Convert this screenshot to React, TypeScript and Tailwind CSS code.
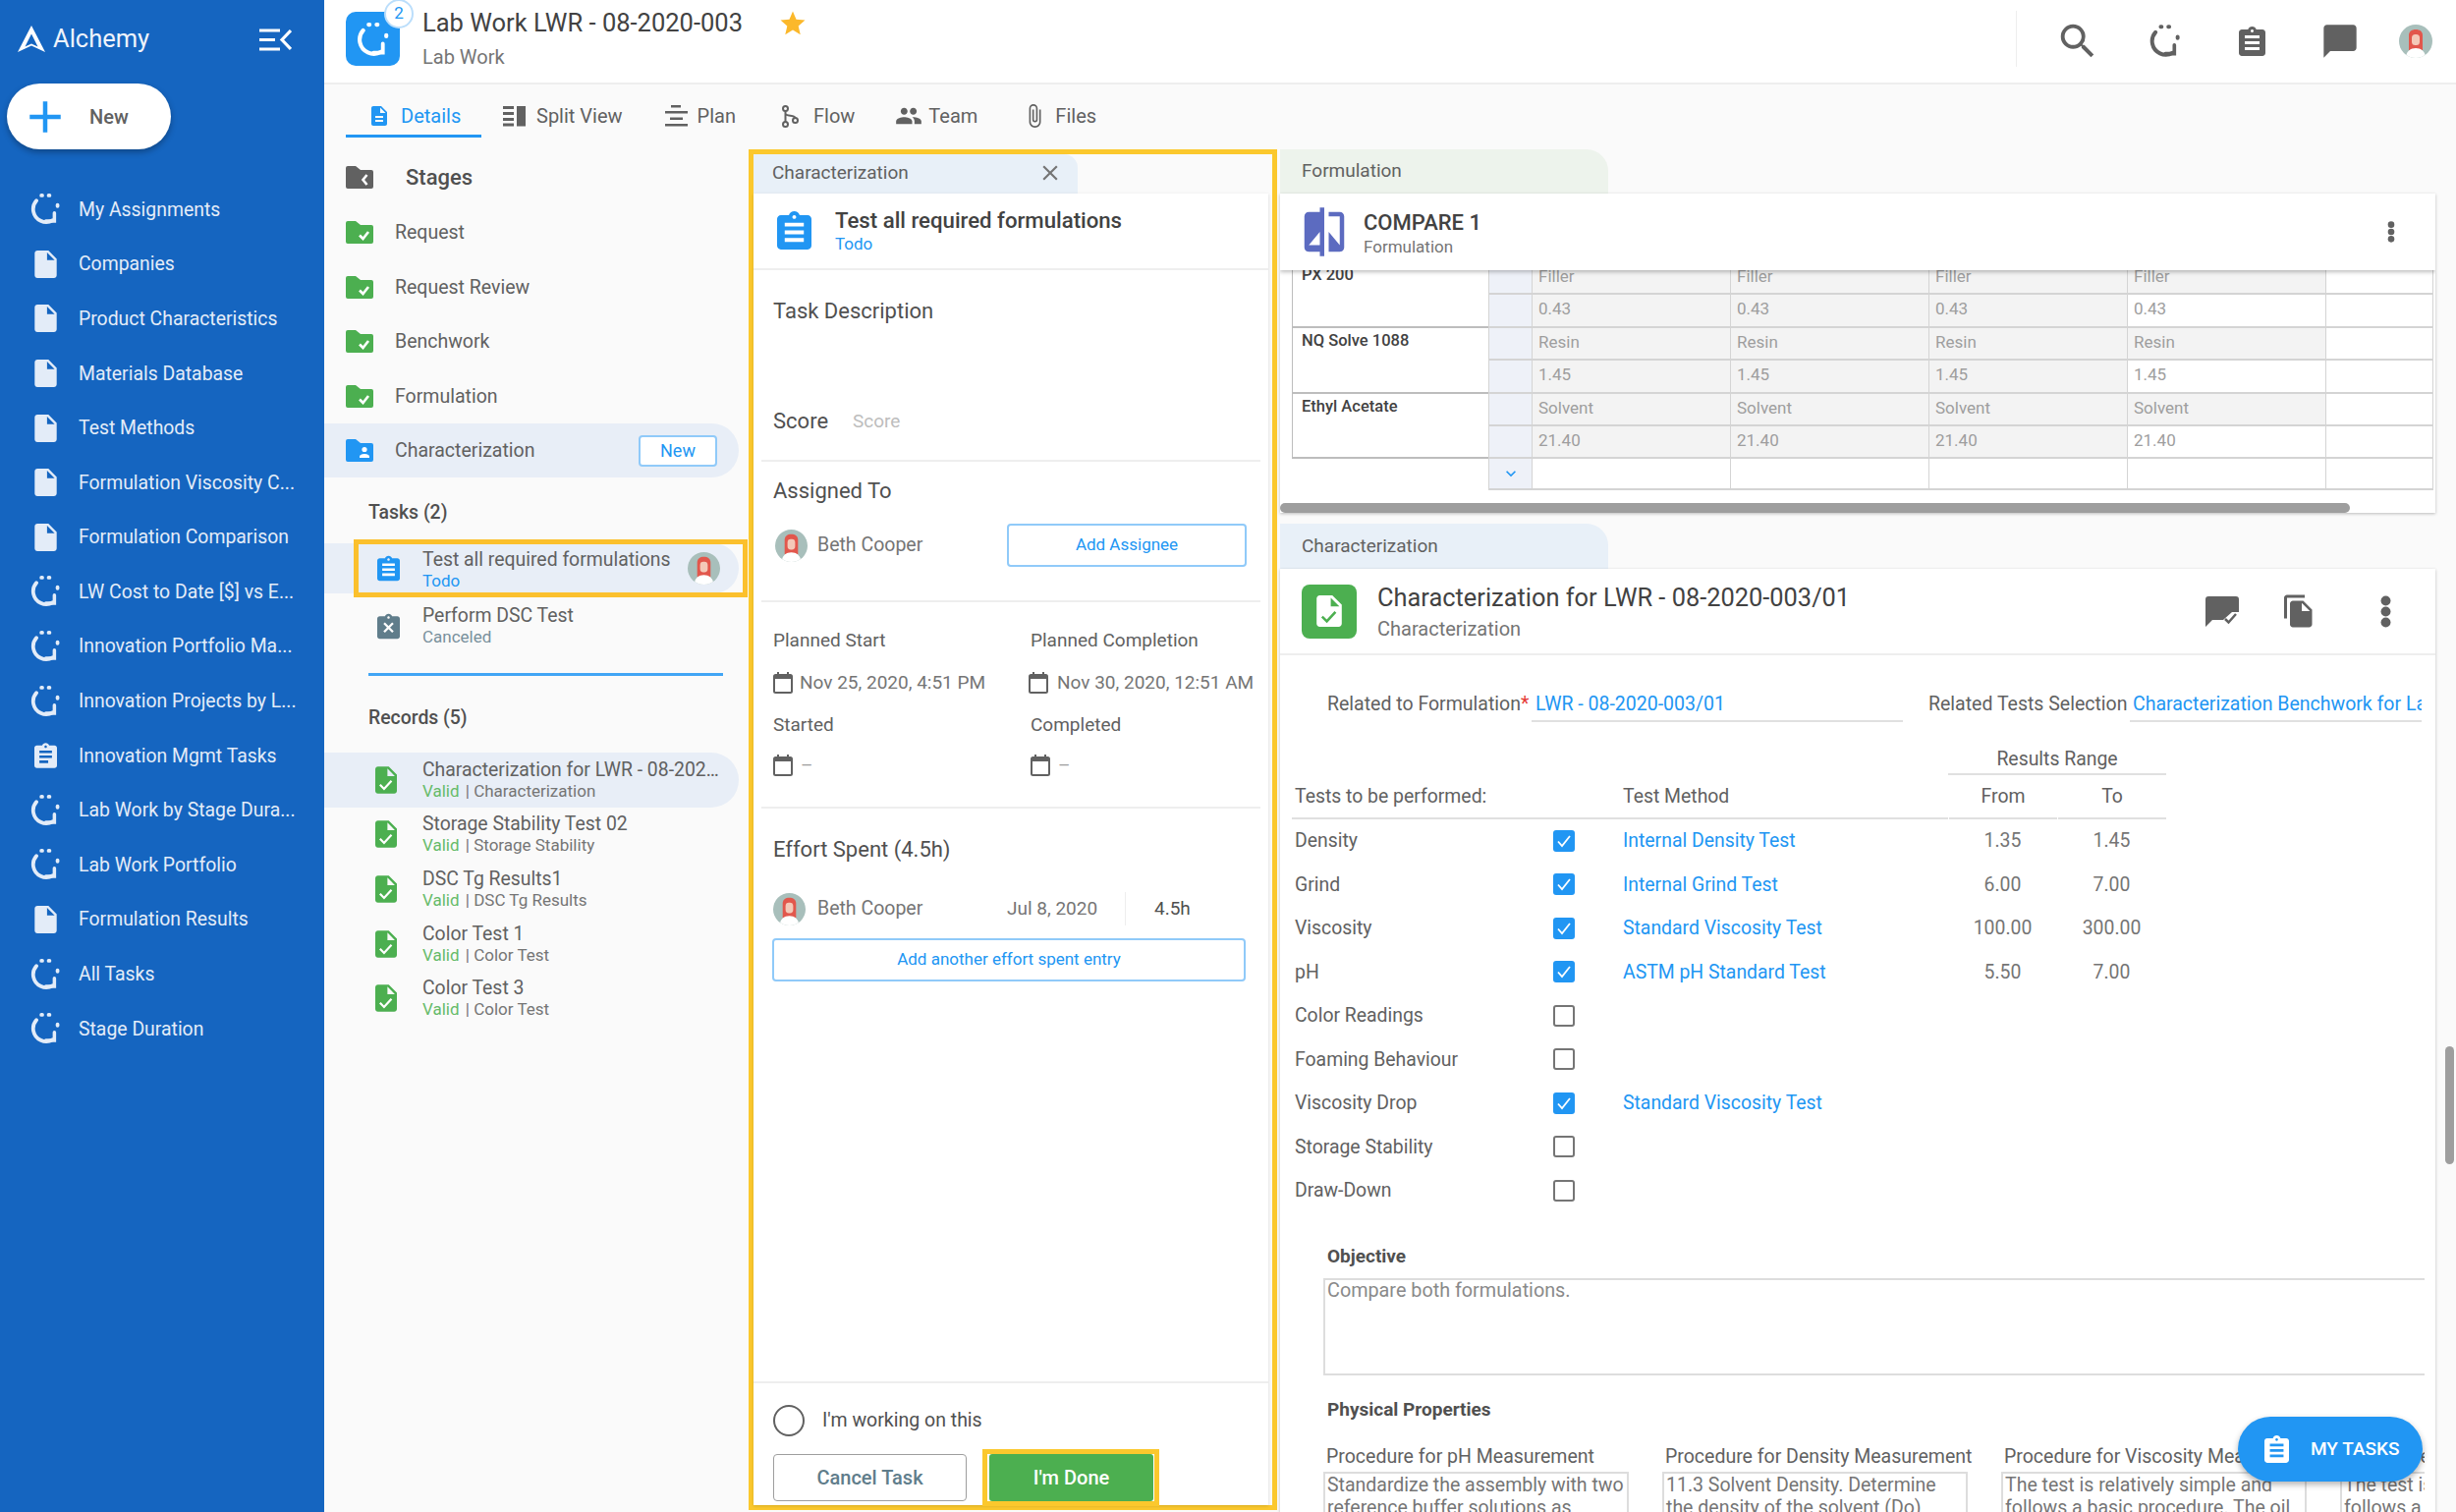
import type { ReactNode } from 'react'
import { MdAdd, MdAttachFile, MdChatBubble, MdClose, MdCompare, MdDescription, MdExpandMore, MdFileCopy, MdPeople, MdSearch, MdStar } from 'react-icons/md'

type IconProps = { className?: string }

const DOC_PATH = 'M14 2H6c-1.1 0-1.99.9-1.99 2L4 20c0 1.1.89 2 1.99 2H18c1.1 0 2-.9 2-2V8l-6-6zm-1 7V3.5L18.5 9H13z'
const CLIP_PATH = 'M19 3h-4.18C14.4 1.84 13.3 1 12 1c-1.3 0-2.4.84-2.82 2H5c-1.1 0-2 .9-2 2v14c0 1.1.9 2 2 2h14c1.1 0 2-.9 2-2V5c0-1.1-.9-2-2-2zm-7 0c.55 0 1 .45 1 1s-.45 1-1 1-1-.45-1-1 .45-1 1-1z'
const FOLDER_PATH = 'M0 2a2 2 0 0 1 2-2h8l5 4h11a2 2 0 0 1 2 2v15a2 2 0 0 1-2 2H2a2 2 0 0 1-2-2z'

function CycleIcon({ className }: IconProps) {
  return (
    <svg viewBox="2 1.5 21 22" fill="none" stroke="currentColor" strokeWidth="2.6" strokeLinecap="round" className={className}>
      <path d="M6 6.500A9 9 0 0 0 9 20.600a9 9 0 0 0 8.500-.4" />
      <path d="M18.600 15v5.800h-6" strokeWidth="2.400" />
      <path d="M9.500 2.800h.6M14.600 2.800h.6M20.800 9.500v.8" />
    </svg>
  )
}

function DocIcon({ className }: IconProps) {
  return (
    <svg viewBox="4 2 16 20" fill="currentColor" className={className}>
      <path d={DOC_PATH} />
    </svg>
  )
}

function ClipIcon({ className }: IconProps) {
  return (
    <svg viewBox="3 1 18 20" fill="currentColor" className={className}>
      <path d={CLIP_PATH} />
      <path d="M7 7h10v2H7zM7 11h10v2H7zM7 15h10v2H7z" fill="#fff" />
    </svg>
  )
}

function ClipCancelIcon({ className }: IconProps) {
  return (
    <svg viewBox="3 1 18 20" fill="currentColor" className={className}>
      <path d={CLIP_PATH} />
      <path d="M8.500 8.500l7 7M15.500 8.500l-7 7" stroke="#fff" strokeWidth="1.800" fill="none" />
    </svg>
  )
}

function DocCheckIcon({ className }: IconProps) {
  return (
    <svg viewBox="4 2 16 20" fill="currentColor" className={className}>
      <path d={DOC_PATH} />
      <path d="M7.500 15.500l3 3 5.500-6" stroke="#fff" strokeWidth="1.600" fill="none" />
    </svg>
  )
}

function FolderIcon({ kind, className }: IconProps & { kind: 'check' | 'back' | 'person' }) {
  return (
    <svg viewBox="0 0 28 23" fill="currentColor" className={className}>
      <path d={FOLDER_PATH} />
      {kind === 'check' && <path d="M14 14.500l3.500 3.500 5.500-7" stroke="#fff" strokeWidth="2.600" fill="none" />}
      {kind === 'back' && <path d="M21.500 9l-4 5 4 5" stroke="#fff" strokeWidth="2.600" fill="none" />}
      {kind === 'person' && (
        <g fill="#fff">
          <circle cx="19" cy="10.500" r="2.600" />
          <path d="M14 19v-1.500c0-1.800 3-2.600 5-2.600s5 .8 5 2.600V19z" />
        </g>
      )}
    </svg>
  )
}

function Avatar({ className }: IconProps) {
  return (
    <svg viewBox="0 0 34 34" className={className}>
      <defs>
        <clipPath id="avatar-clip">
          <circle cx="17" cy="17" r="17" />
        </clipPath>
      </defs>
      <g clipPath="url(#avatar-clip)">
        <rect width="34" height="34" fill="#a8bfbb" />
        <path d="M10 26V11c0-4 3-6 7-6s7 2 7 6v15z" fill="#e2574c" />
        <rect x="13" y="10" width="8" height="11" rx="3.500" fill="#f4c9b8" />
        <path d="M7 34c0-7 5-10 10-10s10 3 10 10z" fill="#fff" />
      </g>
    </svg>
  )
}

function CalendarIcon() {
  return (
    <svg viewBox="0 0 20 22" className="h-[22px] w-[20px] shrink-0" fill="none" stroke="#616161" strokeWidth="2">
      <rect x="1" y="3" width="18" height="18" rx="1.500" />
      <path d="M1 5h18" strokeWidth="4" />
      <path d="M5 0v3M15 0v3" />
    </svg>
  )
}

function Kebab({ className }: IconProps) {
  return (
    <svg viewBox="0 0 10 30" fill="currentColor" className={className}>
      <circle cx="5" cy="5" r="4.500" />
      <circle cx="5" cy="15" r="4.500" />
      <circle cx="5" cy="25" r="4.500" />
    </svg>
  )
}

function SplitIcon({ className }: IconProps) {
  return (
    <svg viewBox="0 0 23 22" fill="currentColor" className={className}>
      <path d="M0 1h11v3H0zM0 7h11v3H0zM0 13h11v3H0zM0 18.500h11v3H0zM14 1h9v20.500h-9z" />
    </svg>
  )
}

function PlanIcon({ className }: IconProps) {
  return (
    <svg viewBox="0 0 23 22" fill="currentColor" className={className}>
      <path d="M6 0h10v2.500H6zM0 6h23v2.500H0zM5 12.500h13V15H5zM0 19h23v2.500H0z" />
    </svg>
  )
}

function FlowIcon({ className }: IconProps) {
  return (
    <svg viewBox="0 0 17 23" fill="none" stroke="currentColor" strokeWidth="2" className={className}>
      <circle cx="3.500" cy="3.500" r="2.500" />
      <circle cx="3.500" cy="19.500" r="2.500" />
      <circle cx="13.500" cy="15.500" r="2.500" />
      <path d="M3.500 6v11M3.500 8.500c0 3 10 1.500 10 4.500" />
    </svg>
  )
}

function NoteCheckIcon({ className }: IconProps) {
  return (
    <svg viewBox="0 0 34 31" fill="currentColor" className={className}>
      <path d="M3 0h28a3 3 0 0 1 3 3v13h-7l-9 8H7l-7 7V3a3 3 0 0 1 3-3z" />
      <path d="M20 23l3.500 3.500 7.500-8.500" stroke="currentColor" strokeWidth="2.500" fill="none" />
    </svg>
  )
}

function LogoMark() {
  return (
    <svg viewBox="0 0 28 28" className="h-[28px] w-[28px]" fill="#fff">
      <path fillRule="evenodd" d="M14 0l14 27-14-6.500L0 27zM14 8.500L7.500 21.500 14 18.500l6.500 3z" />
    </svg>
  )
}

function CollapseIcon() {
  return (
    <svg viewBox="0 0 33 23" className="h-[23px] w-[33px]" fill="none" stroke="#fff" strokeWidth="3.200">
      <path d="M0 2h21M0 11.500h16M0 21h21M32 2l-9 9.500 9 9.500" />
    </svg>
  )
}

const sidebarItems: { label: string; icon: 'cycle' | 'doc' | 'clip' }[] = [
  { label: 'My Assignments', icon: 'cycle' },
  { label: 'Companies', icon: 'doc' },
  { label: 'Product Characteristics', icon: 'doc' },
  { label: 'Materials Database', icon: 'doc' },
  { label: 'Test Methods', icon: 'doc' },
  { label: 'Formulation Viscosity C...', icon: 'doc' },
  { label: 'Formulation Comparison', icon: 'doc' },
  { label: 'LW Cost to Date [$] vs E...', icon: 'cycle' },
  { label: 'Innovation Portfolio Ma...', icon: 'cycle' },
  { label: 'Innovation Projects by L...', icon: 'cycle' },
  { label: 'Innovation Mgmt Tasks', icon: 'clip' },
  { label: 'Lab Work by Stage Dura...', icon: 'cycle' },
  { label: 'Lab Work Portfolio', icon: 'cycle' },
  { label: 'Formulation Results', icon: 'doc' },
  { label: 'All Tasks', icon: 'cycle' },
  { label: 'Stage Duration', icon: 'cycle' },
]

function Sidebar() {
  return (
    <aside className="flex w-[330px] shrink-0 flex-col bg-[#1565c0]">
      <div className="mb-[5px] flex h-[80px] items-center justify-between pl-[18px] pr-[33px]">
        <div className="flex items-center gap-[8px]">
          <LogoMark />
          <span className="text-[25.500px] leading-none text-[#eef3fb]">Alchemy</span>
        </div>
        <CollapseIcon />
      </div>
      <button className="ml-[7px] flex h-[67px] w-[167px] items-center rounded-full bg-white pl-[12px] shadow-[0_3px_6px_rgba(0,0,0,0.3)]">
        <MdAdd className="h-[54px] w-[54px] text-[#2196f3]" />
        <span className="ml-[18px] text-[20px] font-medium text-[#616161]">New</span>
      </button>
      <nav className="mt-[33.500px] flex flex-col">
        {sidebarItems.map(item => (
          <div key={item.label} className="flex h-[55.6px] items-center pl-[30px] text-[#e3ecf8]">
            <span className="flex w-[32px] justify-center">
              {item.icon === 'cycle' && <CycleIcon className="h-[32px] w-[31px]" />}
              {item.icon === 'doc' && <DocIcon className="h-[28px] w-[23px]" />}
              {item.icon === 'clip' && (
                <svg viewBox="3 1 18 20" fill="currentColor" className="h-[28px] w-[23px]">
                  <path d={CLIP_PATH} />
                  <path d="M7 7h10v2H7zM7 11h10v2H7zM7 15h7v2H7z" fill="#1565c0" />
                </svg>
              )}
            </span>
            <span className="ml-[18px] whitespace-nowrap text-[19.400px] text-[#e3ecf8]">{item.label}</span>
          </div>
        ))}
      </nav>
    </aside>
  )
}

function TopBar() {
  return (
    <header className="flex h-[86px] shrink-0 border-b-2 border-[#eeeeee] bg-white">
      <div className="relative ml-[22px] mt-[12px] h-[55px] w-[55px] rounded-[10px] bg-[#2196f3] text-white">
        <CycleIcon className="ml-[11px] mt-[11px] h-[35px] w-[34px]" />
        <span className="absolute -right-[14px] -top-[13px] flex h-[30px] w-[30px] items-center justify-center rounded-full border-2 border-[#bbdefb] bg-white text-[17px] text-[#2196f3]">2</span>
      </div>
      <div className="ml-[23px] pt-[8px]">
        <div className="whitespace-nowrap text-[25.500px] leading-[30px] text-[#424242]">Lab Work LWR - 08-2020-003</div>
        <div className="mt-[8px] text-[20px] leading-[24px] text-[#757575]">Lab Work</div>
      </div>
      <MdStar className="ml-[36px] mt-[9px] h-[30px] w-[30px] text-[#fbb82b]" />
      <div className="ml-auto flex h-full items-center pr-[24px] text-[#616161]">
        <div className="mb-[6px] mr-[17px] h-[57px] w-px bg-[#eeeeee]" />
        <span className="flex w-[89px] justify-center"><MdSearch className="h-[46px] w-[46px]" /></span>
        <span className="flex w-[89px] justify-center"><CycleIcon className="h-[34px] w-[32px]" /></span>
        <span className="flex w-[89px] justify-center"><ClipIcon className="h-[34px] w-[27px]" /></span>
        <span className="flex w-[89px] justify-center"><MdChatBubble className="h-[40px] w-[40px]" /></span>
        <Avatar className="ml-[16px] h-[34px] w-[34px]" />
      </div>
    </header>
  )
}

const tabs: { label: string; icon: ReactNode; gap: string; ml: string }[] = [
  { label: 'Split View', icon: <SplitIcon className="h-[22px] w-[23px]" />, gap: 'gap-[11px]', ml: 'ml-[22px]' },
  { label: 'Plan', icon: <PlanIcon className="h-[22px] w-[23px]" />, gap: 'gap-[10px]', ml: 'ml-[43px]' },
  { label: 'Flow', icon: <FlowIcon className="h-[23px] w-[17px]" />, gap: 'gap-[15px]', ml: 'ml-[47px]' },
  { label: 'Team', icon: <MdPeople className="h-[28px] w-[28px]" />, gap: 'gap-[6px]', ml: 'ml-[41px]' },
  { label: 'Files', icon: <MdAttachFile className="h-[26px] w-[26px]" />, gap: 'gap-[8px]', ml: 'ml-[45px]' },
]

function TabBar() {
  return (
    <div className="flex h-[54px] shrink-0 items-stretch pl-[22px] text-[20px] text-[#616161]">
      <div className="flex w-[138px] items-center gap-[10px] border-b-[3px] border-[#2196f3] pl-[22px] pt-[13px] text-[#2196f3]">
        <MdDescription className="h-[28px] w-[24px]" />
        <span>Details</span>
      </div>
      {tabs.map(tab => (
        <div key={tab.label} className={`flex items-center pb-[3px] pt-[13px] ${tab.gap} ${tab.ml}`}>
          {tab.icon}
          <span>{tab.label}</span>
        </div>
      ))}
    </div>
  )
}

const stages = ['Request', 'Request Review', 'Benchwork', 'Formulation']

const records = [
  { title: 'Characterization for LWR - 08-2020-003/01', type: 'Characterization' },
  { title: 'Storage Stability Test 02', type: 'Storage Stability' },
  { title: 'DSC Tg Results1', type: 'DSC Tg Results' },
  { title: 'Color Test 1', type: 'Color Test' },
  { title: 'Color Test 3', type: 'Color Test' },
]

function StagesPanel() {
  return (
    <section className="w-[432px] shrink-0 text-[#616161]">
      <div className="flex h-[57px] items-center pl-[22px]">
        <FolderIcon kind="back" className="h-[23px] w-[28px] text-[#616161]" />
        <span className="ml-[33px] text-[22px] font-medium text-[#505050]">Stages</span>
      </div>
      {stages.map(stage => (
        <div key={stage} className="flex h-[55.6px] items-center pl-[22px] text-[19.500px]">
          <FolderIcon kind="check" className="h-[23px] w-[28px] text-[#4caf50]" />
          <span className="ml-[22px]">{stage}</span>
        </div>
      ))}
      <div className="flex h-[55px] w-[422px] items-center rounded-r-full bg-[#e8eef7] pl-[22px] text-[19.500px]">
        <FolderIcon kind="person" className="h-[23px] w-[28px] text-[#2196f3]" />
        <span className="ml-[22px]">Characterization</span>
        <span className="ml-auto mr-[22px] flex h-[32px] w-[80px] items-center justify-center rounded-[4px] border-2 border-[#90caf9] bg-white text-[18px] text-[#2196f3]">New</span>
      </div>

      <div className="ml-[45px] mt-[23px] h-[26px] text-[19.400px] font-medium leading-[26px] text-[#505050]">Tasks (2)</div>
      <div className="relative mt-[18px] flex h-[51px] w-[422px] items-center rounded-r-full bg-[#e8eef7] pl-[54px]">
        <ClipIcon className="h-[27px] w-[23px] text-[#2196f3]" />
        <div className="ml-[23px] pt-[2px]">
          <div className="text-[19.400px] leading-[22px]">Test all required formulations</div>
          <div className="text-[17px] leading-[20px] text-[#2196f3]">Todo</div>
        </div>
        <Avatar className="ml-auto mr-[19px] h-[33px] w-[33px]" />
        <div className="absolute -top-[4px] left-[30px] h-[59px] w-[401px] border-[5px] border-[#fbc02d]" />
      </div>
      <div className="mt-[5px] flex h-[55.6px] items-center pl-[54px]">
        <ClipCancelIcon className="h-[27px] w-[23px] text-[#607d8b]" />
        <div className="ml-[23px]">
          <div className="text-[19.400px] leading-[22px]">Perform DSC Test</div>
          <div className="text-[17px] leading-[20px] text-[#78909c]">Canceled</div>
        </div>
      </div>
      <div className="ml-[45px] mt-[20px] h-[3px] w-[361px] bg-[#42a5f5]" />

      <div className="ml-[45px] mt-[30px] h-[26px] text-[19.400px] font-medium leading-[26px] text-[#505050]">Records (5)</div>
      <div className="mt-[22px]">
        {records.map((record, i) => (
          <div key={record.title} className={`flex h-[55.6px] w-[422px] items-center rounded-r-full pl-[52px] ${i === 0 ? 'bg-[#e8eef7]' : ''}`}>
            <DocCheckIcon className="h-[28px] w-[22px] shrink-0 text-[#4caf50]" />
            <div className="ml-[26px] w-[304px]">
              <div className="truncate text-[19.400px] leading-[22px]">{record.title}</div>
              <div className="text-[17px] leading-[20px]">
                <span className="text-[#66bb6a]">Valid</span> <span className="ml-[2px] text-[#757575]">| {record.type}</span>
              </div>
            </div>
          </div>
        ))}
      </div>
    </section>
  )
}

function TaskPanel() {
  return (
    <section className="flex h-[1385px] w-[538px] shrink-0 flex-col border-[5px] border-[#fbc82d]">
      <div className="flex h-[40px] w-[330px] shrink-0 items-center justify-between rounded-tr-[14px] bg-[#e8f0f8] pb-[2px] pl-[19px] pr-[15px] text-[19px] text-[#616161]">
        <span>Characterization</span>
        <MdClose className="h-[26px] w-[26px] text-[#757575]" />
      </div>
      <div className="flex w-[524px] flex-1 flex-col bg-white shadow-[0_1px_3px_rgba(0,0,0,0.15)]">
        <div className="flex h-[78px] shrink-0 items-center border-b-2 border-[#eeeeee] pb-[2px] pl-[24px]">
          <ClipIcon className="h-[45px] w-[35px] text-[#2196f3]" />
          <div className="ml-[24px]">
            <div className="text-[22.200px] font-medium leading-[28px] text-[#424242]">Test all required formulations</div>
            <div className="text-[17px] leading-[20px] text-[#2196f3]">Todo</div>
          </div>
        </div>

        <div className="mx-[8px] border-b-2 border-[#eeeeee] px-[12px] pb-[25px]">
          <div className="mt-[28px] text-[22px] leading-[28px] text-[#505050]">Task Description</div>
          <div className="mt-[84px] flex items-center text-[22px] leading-[28px] text-[#505050]">
            Score <span className="ml-[25px] text-[19px] text-[#bdbdbd]">Score</span>
          </div>
        </div>

        <div className="mx-[8px] border-b-2 border-[#eeeeee] px-[12px] pb-[34px]">
          <div className="mt-[16px] text-[22px] leading-[28px] text-[#505050]">Assigned To</div>
          <div className="mt-[19px] flex h-[44px] items-center">
            <Avatar className="ml-[2px] h-[33px] w-[33px]" />
            <span className="ml-[10px] text-[19.500px] text-[#757575]">Beth Cooper</span>
            <span className="ml-auto mr-[2px] flex h-[44px] w-[244px] items-center justify-center rounded-[4px] border-2 border-[#90caf9] text-[17px] text-[#2196f3]">Add Assignee</span>
          </div>
        </div>

        <div className="mx-[8px] grid grid-cols-[262px_1fr] border-b-2 border-[#eeeeee] pb-[30px] pl-[12px] text-[19px] leading-[24px]">
          <div className="mt-[27px] text-[#616161]">Planned Start</div>
          <div className="mt-[27px] text-[#616161]">Planned Completion</div>
          <div className="mt-[19px] flex items-center gap-[7px] whitespace-nowrap text-[#757575]"><CalendarIcon />Nov 25, 2020, 4:51 PM</div>
          <div className="-ml-[2px] mt-[19px] flex items-center gap-[9px] whitespace-nowrap text-[#757575]"><CalendarIcon />Nov 30, 2020, 12:51 AM</div>
          <div className="mt-[19px] text-[#616161]">Started</div>
          <div className="mt-[19px] text-[#616161]">Completed</div>
          <div className="mt-[17px] flex items-center gap-[8px] text-[#9e9e9e]"><CalendarIcon />–</div>
          <div className="mt-[17px] flex items-center gap-[8px] text-[#9e9e9e]"><CalendarIcon />–</div>
        </div>

        <div className="px-[20px]">
          <div className="mt-[28px] text-[22px] leading-[28px] text-[#505050]">Effort Spent (4.5h)</div>
          <div className="mt-[29px] flex h-[34px] items-center text-[19px]">
            <Avatar className="h-[33px] w-[33px]" />
            <span className="ml-[12px] w-[193px] text-[19.500px] text-[#757575]">Beth Cooper</span>
            <span className="w-[121px] border-r border-[#eeeeee] leading-[34px] text-[#757575]">Jul 8, 2020</span>
            <span className="ml-[29px] text-[#505050]">4.5h</span>
          </div>
          <div className="-ml-px mt-[13px] flex h-[44px] w-[482px] items-center justify-center rounded-[4px] border-2 border-[#90caf9] text-[17px] text-[#2196f3]">Add another effort spent entry</div>
        </div>

        <div className="mt-auto h-[126px] shrink-0 border-t-2 border-[#eeeeee] px-[20px] pt-[22px]">
          <div className="flex h-[32px] items-center">
            <span className="h-[32px] w-[32px] rounded-full border-2 border-[#616161]" />
            <span className="ml-[18px] text-[19.500px] text-[#505050]">I'm working on this</span>
          </div>
          <div className="mt-[18px] flex">
            <span className="flex h-[48px] w-[197px] items-center justify-center rounded-[4px] border border-[#9e9e9e] text-[20px] font-medium text-[#607d8b]">Cancel Task</span>
            <span className="relative ml-[23px] flex h-[48px] w-[167px] items-center justify-center rounded-[3px] bg-[#4caf50] text-[20px] font-medium text-white">
              I'm Done
              <span className="absolute -bottom-[5px] -left-[7px] -right-[6px] -top-[5px] border-[5px] border-[#fbc82d]" />
            </span>
          </div>
        </div>
      </div>
    </section>
  )
}

const materials = [
  { name: 'PX 200', kind: 'Filler', value: '0.43' },
  { name: 'NQ Solve 1088', kind: 'Resin', value: '1.45' },
  { name: 'Ethyl Acetate', kind: 'Solvent', value: '21.40' },
]

const cellBorder = 'border-b-2 border-r border-[#d4d4d4]'

function FormulationTable() {
  return (
    <div className="ml-[12px] grid grid-cols-[200px_45px_202px_202px_202px_202px_109px] grid-rows-[25px_34px_33px_34px_33px_33px_32px]">
      {materials.map((m, mi) => (
        <div key={m.name} className="contents">
          <div className={`row-span-2 border-b-2 border-l border-[#bdbdbd] pl-[9px] text-[16.500px] font-medium leading-[20px] text-[#424242] ${mi === 0 ? '-mt-[5px]' : 'pt-[3px]'}`}>{m.name}</div>
          {[m.kind, m.value].map((text, ri) => (
            <div key={text} className="contents">
              <div className={`border-x border-[#d4d4d4] bg-[#eef1f8] ${cellBorder}`} />
              {[0, 1, 2, 3].map(col => (
                <div key={col} className={`flex pb-[2px] pl-[6px] text-[17px] text-[#9e9e9e] ${cellBorder} ${mi === 0 && ri === 0 ? 'items-start leading-[12px]' : 'items-center'} ${ri === 1 && col === 3 ? 'bg-white' : 'bg-[#f3f3f3]'}`}>
                  {text}
                </div>
              ))}
              <div className={cellBorder} />
            </div>
          ))}
        </div>
      ))}
      <div />
      <div className={`flex items-center justify-center bg-[#eef1f8] ${cellBorder} border-x`}>
        <MdExpandMore className="h-[20px] w-[20px] text-[#2196f3]" />
      </div>
      {[0, 1, 2, 3, 4].map(col => <div key={col} className={cellBorder} />)}
    </div>
  )
}

const tests = [
  { name: 'Density', checked: true, method: 'Internal Density Test', from: '1.35', to: '1.45' },
  { name: 'Grind', checked: true, method: 'Internal Grind Test', from: '6.00', to: '7.00' },
  { name: 'Viscosity', checked: true, method: 'Standard Viscosity Test', from: '100.00', to: '300.00' },
  { name: 'pH', checked: true, method: 'ASTM pH Standard Test', from: '5.50', to: '7.00' },
  { name: 'Color Readings', checked: false },
  { name: 'Foaming Behaviour', checked: false },
  { name: 'Viscosity Drop', checked: true, method: 'Standard Viscosity Test' },
  { name: 'Storage Stability', checked: false },
  { name: 'Draw-Down', checked: false },
]

function Checkbox({ checked }: { checked: boolean }) {
  if (!checked) return <span className="h-[22px] w-[22px] rounded-[3px] border-2 border-[#757575] bg-white" />
  return (
    <span className="flex h-[22px] w-[22px] items-center justify-center rounded-[3px] bg-[#2196f3]">
      <svg viewBox="0 0 22 22" className="h-[22px] w-[22px]" fill="none" stroke="#fff" strokeWidth="1.800">
        <path d="M5 11.500l4 4.500 8-10" />
      </svg>
    </span>
  )
}

function TestsTable() {
  return (
    <div className="ml-[12px] mt-[26px] grid w-[890px] grid-cols-[337px_331px_111px_111px] text-[19.400px]">
      <div className="col-start-3 col-span-2 h-[28px] border-b-2 border-[#e0e0e0] text-center leading-[24px] text-[#616161]">Results Range</div>
      <div className="flex h-[44.500px] items-center border-b-2 border-[#e0e0e0] pl-[3px] text-[#616161]">Tests to be performed:</div>
      <div className="flex h-[44.500px] items-center border-b-2 border-[#e0e0e0] text-[#616161]">Test Method</div>
      <div className="ml-px flex h-[44.500px] items-center justify-center border-b-2 border-[#e0e0e0] text-[#616161]">From</div>
      <div className="ml-px flex h-[44.500px] items-center justify-center border-b-2 border-[#e0e0e0] text-[#616161]">To</div>
      {tests.map(t => (
        <div key={t.name} className="contents">
          <div className="flex h-[44.500px] items-center justify-between pl-[3px] pr-[49px] text-[#616161]">
            {t.name}
            <Checkbox checked={t.checked} />
          </div>
          <div className="flex items-center text-[#2196f3]">{t.method}</div>
          <div className="flex items-center justify-center text-[#757575]">{t.from}</div>
          <div className="flex items-center justify-center text-[#757575]">{t.to}</div>
        </div>
      ))}
    </div>
  )
}

const procedures = [
  { label: 'Procedure for pH Measurement', text: 'Standardize the assembly with two reference buffer solutions as' },
  { label: 'Procedure for Density Measurement', text: '11.3 Solvent Density. Determine the density of the solvent (Do)' },
  { label: 'Procedure for Viscosity Measurement', text: 'The test is relatively simple and follows a basic procedure. The oil' },
  { label: 'Procedure for Viscosity Measurement', text: 'The test is relatively simple and follows a basic procedure. The oil' },
]

function DetailsPanel() {
  return (
    <section className="ml-[3px] flex w-[1176px] shrink-0 flex-col">
      <div className="flex h-[45px] w-[334px] shrink-0 items-center rounded-tr-[22px] bg-[#edf3ec] pl-[22px] text-[19px] text-[#616161]">Formulation</div>
      <div className="h-[325px] shrink-0 overflow-hidden bg-white shadow-[0_1px_3px_rgba(0,0,0,0.25)]">
        <div className="relative z-10 flex h-[78px] items-center bg-white pl-[26px] pr-[41px] shadow-[0_2px_4px_rgba(0,0,0,0.25)]">
          <MdCompare className="h-[54px] w-[54px] shrink-0 -mx-[8px] text-[#5c6bc0]" />
          <div className="ml-[21px] pt-[1px]">
            <div className="text-[22px] font-medium leading-[28px] text-[#424242]">COMPARE 1</div>
            <div className="text-[17px] leading-[20px] text-[#757575]">Formulation</div>
          </div>
          <Kebab className="ml-auto h-[22px] w-[8px] text-[#616161]" />
        </div>
        <FormulationTable />
        <div className="mt-[13px] h-[10px] w-[1089px] rounded-full bg-[#9e9e9e]" />
      </div>

      <div className="mt-[11px] flex h-[46px] w-[334px] shrink-0 items-center rounded-tr-[22px] bg-[#e8f0f8] pl-[22px] text-[19px] text-[#616161]">Characterization</div>
      <div className="flex-1 bg-white shadow-[0_1px_3px_rgba(0,0,0,0.25)]">
        <div className="flex h-[88px] items-center border-b-2 border-[#eeeeee] pl-[22px] pr-[45px]">
          <span className="flex h-[55px] w-[56px] items-center justify-center rounded-[8px] bg-[#4caf50]">
            <svg viewBox="4 2 16 20" className="h-[32px] w-[26px]">
              <path d={DOC_PATH} fill="#fff" />
              <path d="M7.500 15.500l3 3 5.500-6" stroke="#4caf50" strokeWidth="1.600" fill="none" />
            </svg>
          </span>
          <div className="ml-[21px]">
            <div className="whitespace-nowrap text-[25.400px] leading-[30px] text-[#424242]">Characterization for LWR - 08-2020-003/01</div>
            <div className="mt-[5px] text-[20px] leading-[24px] text-[#757575]">Characterization</div>
          </div>
          <NoteCheckIcon className="ml-auto h-[31px] w-[34px] text-[#616161]" />
          <MdFileCopy className="ml-[43px] h-[36px] w-[36px] text-[#616161]" />
          <Kebab className="ml-[65px] h-[33px] w-[11px] text-[#616161]" />
        </div>

        <div className="ml-[48px] mt-[38px] flex h-[30px] items-start text-[19.500px] leading-[24px] text-[#616161]">
          <span className="w-[208px] shrink-0 whitespace-nowrap">Related to Formulation<span className="text-[#e53935]">*</span></span>
          <span className="h-[30px] w-[378px] shrink-0 border-b-2 border-[#e0e0e0] pl-[4px] text-[#2196f3]">LWR - 08-2020-003/01</span>
          <span className="ml-[26px] w-[205px] shrink-0 whitespace-nowrap">Related Tests Selection</span>
          <span className="h-[30px] w-[297px] shrink-0 overflow-hidden whitespace-nowrap border-b-2 border-[#e0e0e0] pl-[3px] text-[#2196f3]">Characterization Benchwork for Lab Work</span>
        </div>

        <TestsTable />

        <div className="ml-[48px] mt-[33px] text-[19px] font-bold leading-[24px] text-[#505050]">Objective</div>
        <div className="ml-[44px] mt-[10px] h-[99px] w-[1121px] border-2 border-r-0 border-[#dddddd] pl-[2px] text-[19.800px] leading-[22px] text-[#8a8a8a]">Compare both formulations.</div>

        <div className="ml-[48px] mt-[23px] text-[19px] font-bold leading-[24px] text-[#505050]">Physical Properties</div>
        <div className="ml-[44px] mt-[24px] flex w-[1121px] gap-[34px] overflow-hidden">
          {procedures.map((p, i) => (
            <div key={i} className="w-[311px] shrink-0">
              <div className="whitespace-nowrap pl-[3px] text-[19.500px] leading-[24px] text-[#616161]">{p.label}</div>
              <div className="mt-[3px] h-[80px] border-2 border-[#dddddd] pl-[2px] text-[19.500px] leading-[23px] text-[#757575]">{p.text}</div>
            </div>
          ))}
        </div>
      </div>
    </section>
  )
}

export default function App() {
  return (
    <div className="relative flex h-[1539px] w-[2500px] overflow-hidden bg-[#fafafa] [font-family:Roboto,sans-serif]">
      <Sidebar />
      <main className="flex min-w-0 flex-1 flex-col">
        <TopBar />
        <TabBar />
        <div className="mt-[12px] flex min-h-0 flex-1">
          <StagesPanel />
          <TaskPanel />
          <DetailsPanel />
        </div>
      </main>

      <div className="absolute left-[2278px] top-[1442px] z-20 flex h-[66px] w-[188px] items-center rounded-full bg-[#2196f3] pl-[27px] text-white shadow-[0_3px_6px_rgba(0,0,0,0.3)]">
        <svg viewBox="3 1 18 20" fill="#fff" className="h-[30px] w-[25px]">
          <path d={CLIP_PATH} />
          <path d="M7 7h10v2H7zM7 11h10v2H7zM7 15h10v2H7z" fill="#2196f3" />
        </svg>
        <span className="ml-[22px] text-[19px] font-medium">MY TASKS</span>
      </div>
      <div className="absolute left-[2489px] top-[1065px] h-[120px] w-[9px] rounded-full bg-[#9e9e9e]" />
    </div>
  )
}
